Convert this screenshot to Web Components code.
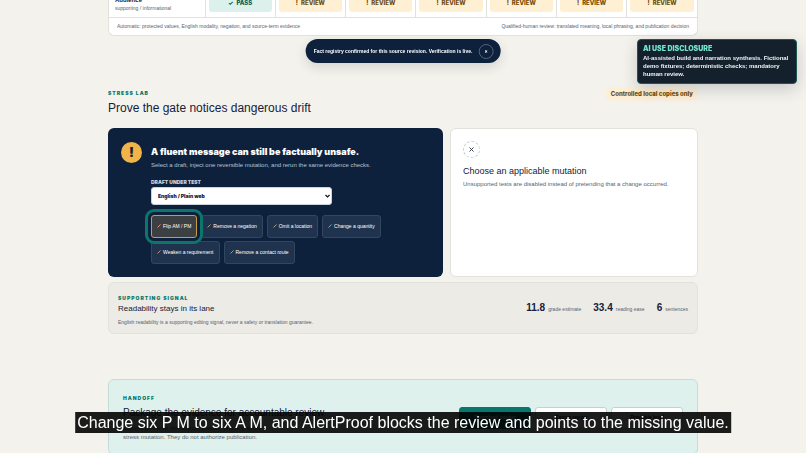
<!DOCTYPE html>
<html lang="en">
<head>
<meta charset="utf-8">
<title>AlertProof</title>
<style>
  :root { --ink:#14213a; --navy:#0d213d; --teal:#08766a; --muted:#596270; --line:#e2e1db; --heavy:Inter,"Liberation Sans",sans-serif; }
  body { margin:0; background:#f4f2ec; color:var(--ink); font:6px/9px "Liberation Sans",Arial,sans-serif; overflow:hidden; height:100vh; }
  main { padding:0 108px; }
</style>
</head>
<body>
<main>
  <evidence-matrix></evidence-matrix>
  <lab-header></lab-header>
  <stress-grid>
    <mutation-panel></mutation-panel>
    <result-panel></result-panel>
  </stress-grid>
  <readability-panel></readability-panel>
  <handoff-panel></handoff-panel>
</main>
<toast-notice>Fact registry confirmed for this source revision. Verification is live.</toast-notice>
<ai-disclosure>AI-assisted build and narration synthesis. Fictional demo fixtures; deterministic checks; mandatory human review.</ai-disclosure>
<video-caption>Change six P M to six A M, and AlertProof blocks the review and points to the missing value.</video-caption>

<script>
const base = `:host,*{box-sizing:border-box} h2,h3,p{margin:0;font-weight:400} button,select{font:inherit;color:inherit;margin:0}`;
function define(name, css, html) {
  customElements.define(name, class extends HTMLElement {
    constructor() {
      super();
      this.attachShadow({mode:"open"}).innerHTML = `<style>${base}${css}</style>${html}`;
    }
  });
}

define("eye-brow", `:host{display:block;font:900 5px/8px var(--heavy);letter-spacing:1px;color:var(--teal);text-transform:uppercase}`, `<slot></slot>`);

define("status-pill", `:host{display:flex;align-items:center;justify-content:center;gap:3px;height:18px;border-radius:3px;background:#fff0d3;color:#704b08;font:800 6px/8px var(--heavy)}
:host([kind=pass]){background:#dcf1ec;color:#075c50}`, `<slot></slot>`);

define("evidence-matrix", `
:host{display:block;margin-top:-11px;background:#fff;border:1px solid var(--line);border-top:0;border-radius:0 0 6px 6px;overflow:hidden}
table{width:100%;border-collapse:collapse;table-layout:fixed}
col:first-child{width:96px}
th,td{height:28px;padding:0 3px 5px;vertical-align:bottom;border-bottom:1px solid var(--line)}
td{border-left:1px solid var(--line)}
th{padding:0 6px 5px;text-align:left;font-weight:400;font-size:5px;line-height:8px;color:var(--muted)}
th b{display:block;color:var(--ink);font-size:6px}
footer{display:flex;justify-content:space-between;padding:4px 8px;font-size:5px;line-height:9px;color:var(--muted)}`,
`<table><colgroup><col><col span="7"></colgroup><tbody><tr><th scope="row"><b>Audience</b>supporting / informational</th>
<td><status-pill kind="pass"><span>✓</span><span>PASS</span></status-pill></td>
${`<td><status-pill><span>!</span><span>REVIEW</span></status-pill></td>`.repeat(6)}</tr></tbody></table>
<footer><span>Automatic: protected values, English modality, negation, and source-term evidence</span><span>Qualified-human review: translated meaning, local phrasing, and publication decision</span></footer>`);

define("lab-header", `
:host{display:flex;justify-content:space-between;align-items:flex-start;padding:53px 0 12px}
h2{font-size:12px;line-height:16px;margin-top:3px}
span{margin-top:-1px;padding:2px 5px;border-radius:8px;background:#fdefd5;box-shadow:0 0 3px #fdefd5;color:#704b08;font:800 6px/8px var(--heavy)}`,
`<div><eye-brow>Stress lab</eye-brow><h2>Prove the gate notices dangerous drift</h2></div><span>Controlled local copies only</span>`);

define("stress-grid", `:host{display:grid;grid-template-columns:335fr 248fr;gap:7px}`, `<slot></slot>`);

define("mutation-panel", `
:host{display:grid;grid-template-columns:21px 1fr;column-gap:9px;padding:14px 13px 13px;border-radius:6px;background:var(--navy);color:#fff}
.mark{display:grid;place-items:center;width:21px;height:21px;border-radius:50%;background:#f0b449;color:var(--ink);font:900 13px/21px var(--heavy)}
h3{font:900 9px/12px var(--heavy);margin-top:4px}
p{color:#b7c2d0;line-height:8px;margin-top:3px}
label{display:block;margin-top:9px;font:900 5px/8px var(--heavy);color:#c8d3e1}
.pick{display:grid;grid-template-columns:1fr;align-items:center;width:65%;margin-top:1px}
select{grid-area:1/1;appearance:none;height:18px;padding:0 6px;border:1px solid #cdd3da;border-radius:3px;background:#fff;color:var(--ink);font:900 5px/8px var(--heavy)}
.pick svg{grid-area:1/1;justify-self:end;margin-right:2px;width:5px;height:4px;pointer-events:none}
.tests{display:flex;flex-wrap:wrap;gap:3px 4px;margin-top:10px}
button{display:flex;align-items:center;gap:2px;height:23px;padding:0 5px;border:1px solid #33465f;border-radius:3px;background:#20334e;color:#fff;font-size:5px;line-height:8px}
button svg{width:4px;height:4px;stroke:#b99776;stroke-width:1;fill:none}
button.on{z-index:1;background:#3d4043;border-color:#c99a48;outline:3px solid #0d756c;outline-offset:3px}
button.on svg{stroke:#ef8d68}`,
`<div class="mark">!</div><div><h3>A fluent message can still be factually unsafe.</h3>
<p>Select a draft, inject one reversible mutation, and rerun the same evidence checks.</p>
<label for="draft">DRAFT UNDER TEST</label>
<div class="pick"><select id="draft"><option>English / Plain web</option></select><svg viewBox="0 0 5 4"><path d="M.5 1 2.500 3 4.500 1" fill="none" stroke="#111" stroke-width="1.200"/></svg></div>
<div class="tests">${["Flip AM / PM","Remove a negation","Omit a location","Change a quantity","Weaken a requirement","Remove a contact route"].map((t,i)=>`<button type="button"${i?"":' class="on"'}><svg viewBox="0 0 4 4"><path d="M.5 3.500 3.500 .5"/></svg>${t}</button>`).join("")}</div></div>`);

define("result-panel", `
:host{display:block;padding:12px;border:1px solid var(--line);border-radius:6px;background:#fff}
.icon{display:grid;place-items:center;width:17px;height:17px;border:1px dashed #c9cbce;border-radius:50%}
.icon svg{width:5px;height:5px;stroke:#3c4654;stroke-width:1}
h3{font-size:9px;line-height:12px;margin-top:7px}
p{color:var(--muted);margin-top:3px}`,
`<div class="icon"><svg viewBox="0 0 5 5"><path d="M.5.5l4 4M4.500.5l-4 4"/></svg></div><h3>Choose an applicable mutation</h3><p>Unsupported tests are disabled instead of pretending that a change occurred.</p>`);

define("readability-panel", `
:host{display:flex;align-items:center;justify-content:space-between;margin-top:5px;padding:11px 9px 7px;border:1px solid var(--line);border-radius:6px;background:#ecebe5}
h3{font-size:8px;line-height:12px;margin-top:1px}
p{font-size:5px;line-height:8px;color:var(--muted);margin-top:3px}
.stats{display:flex;gap:12px;margin-bottom:3px}
.stats div{display:flex;align-items:baseline;gap:3px;font-size:5px;color:var(--muted)}
b{font-size:10px;line-height:12px;color:var(--ink)}`,
`<div><eye-brow>Supporting signal</eye-brow><h3>Readability stays in its lane</h3><p>English readability is a supporting editing signal, never a safety or translation guarantee.</p></div>
<div class="stats"><div><b>11.8</b>grade estimate</div><div><b>33.4</b>reading ease</div><div><b>6</b>sentences</div></div>`);

define("handoff-panel", `
:host{display:flex;align-items:center;justify-content:space-between;gap:20px;margin-top:45px;padding:14px 14px 12px;border:1px solid #c5ddd6;border-radius:6px;background:#def1ed}
h2{font-size:10px;line-height:14px;margin-top:4px}
p{color:var(--muted);margin-top:4px}
.actions{display:flex;gap:4px;flex:none}
button{height:22px;width:72px;border:1px solid #c5d2cf;border-radius:3px;background:#fff;font-weight:700;font-size:5px}
button.primary{background:var(--teal);border-color:var(--teal);color:#fff}`,
`<div><eye-brow>Handoff</eye-brow><h2>Package the evidence for accountable review</h2><p>Exports preserve the source, checks, and any active<br>stress mutation. They do not authorize publication.</p></div>
<div class="actions"><button class="primary" type="button">Download packet</button><button type="button">Export report</button><button type="button">Printable brief</button></div>`);

define("toast-notice", `
:host{position:fixed;top:39px;left:50%;transform:translateX(-50%);display:flex;align-items:center;gap:6px;height:24px;padding:0 7px 0 8px;border-radius:12px;background:var(--navy);color:#fff;font-weight:700;font-size:5px;line-height:8px;white-space:nowrap;box-shadow:0 4px 12px #14213a26}
button{display:grid;place-items:center;width:15px;height:15px;padding:0;border:1px solid #536379;border-radius:50%;background:none}
svg{width:3px;height:3px;stroke:#fff;stroke-width:1}`,
`<slot></slot><button type="button" aria-label="Dismiss"><svg viewBox="0 0 3 3"><path d="M.3.3l2.400 2.400M2.700.3L.3 2.700"/></svg></button>`);

define("ai-disclosure", `
:host{position:fixed;top:39px;right:9px;width:160px;padding:4px 5px 5px;border:1px solid #1f5552;border-radius:4px;background:#14202b;color:#f0f3f5;font-weight:700;font-size:6px;line-height:8px;box-shadow:0 5px 16px #14213a33}
strong{display:block;color:#71e3cb;font:900 7px/10px var(--heavy)}`,
`<strong>AI USE DISCLOSURE</strong><slot></slot>`);

define("video-caption", `:host{position:fixed;left:50%;top:412px;transform:translateX(-50%);padding:1px 2px 0;background:#000000e3;color:#fff;font-size:16px;line-height:20px;white-space:nowrap}`, `<slot></slot>`);
</script>
</body>
</html>
